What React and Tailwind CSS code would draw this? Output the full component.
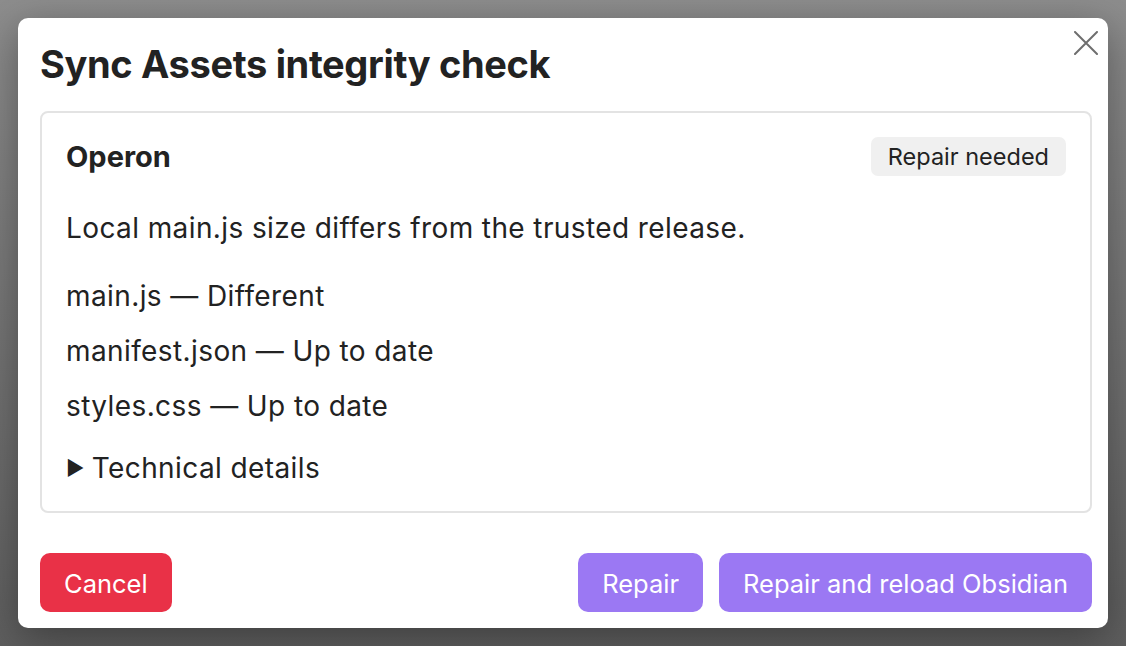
import React from 'react';

const files = [
  { name: 'main.js', status: 'Different' },
  { name: 'manifest.json', status: 'Up to date' },
  { name: 'styles.css', status: 'Up to date' },
];

const App = () => {
  return (
    <div
      className="w-[1126px] h-[646px] bg-gradient-to-b from-[#8d8d8d] to-[#5e5e5e] p-[18px] text-[#222222]"
      style={{ fontFamily: 'Inter, "Noto Sans", sans-serif' }}
    >
      <div className="relative w-[1090px] h-[610px] bg-white rounded-[10px] shadow-[0_10px_40px_rgba(0,0,0,0.35)] pl-[22px] pr-[16px] pt-[22px] pb-[16px] flex flex-col">
        <button className="absolute right-[10px] top-[13px] text-[#6e6e6e]">
          <svg width="24" height="24" viewBox="0 0 24 24" fill="none" stroke="currentColor" strokeWidth="2" strokeLinecap="round">
            <path d="M1 1L23 23M23 1L1 23" />
          </svg>
        </button>

        <h1 className="text-[38px] font-bold leading-[48px] tracking-[-0.35px]">Sync Assets integrity check</h1>

        <div className="mt-[23px] border-2 border-[#e3e3e3] rounded-[8px] px-[24px] pt-[24px] pb-[27px]">
          <div className="flex items-center justify-between">
            <div className="text-[29px] font-bold leading-[36px]">Operon</div>
            <div className="bg-[#f0f0f0] rounded-[7px] px-[17px] h-[39px] flex items-center text-[23.5px]">Repair needed</div>
          </div>

          <p className="mt-[36px] text-[28px] leading-[32px] tracking-[0.4px]">Local main.js size differs from the trusted release.</p>

          <div className="mt-[36px] flex flex-col gap-[23px]">
            {files.map((f) => (
              <div key={f.name} className="text-[28px] leading-[32px] tracking-[0.4px]">
                {f.name} — {f.status}
              </div>
            ))}
          </div>

          <div className="mt-[30px] flex items-center text-[28px] leading-[32px] tracking-[0.4px]">
            <span className="text-[20px] mr-[7px]">▶</span>
            Technical details
          </div>
        </div>

        <div className="mt-auto flex items-center justify-between">
          <button className="bg-[#e93147] text-white text-[25.5px] rounded-[10px] h-[59px] px-[24px] pt-[3px]">Cancel</button>
          <div className="flex items-center gap-[16px]">
            <button className="bg-[#9b78f3] text-white text-[25.5px] rounded-[10px] h-[59px] px-[24px] pt-[3px]">Repair</button>
            <button className="bg-[#9b78f3] text-white text-[25.5px] rounded-[10px] h-[59px] px-[24px] pt-[3px]">Repair and reload Obsidian</button>
          </div>
        </div>
      </div>
    </div>
  );
};

export default App;
